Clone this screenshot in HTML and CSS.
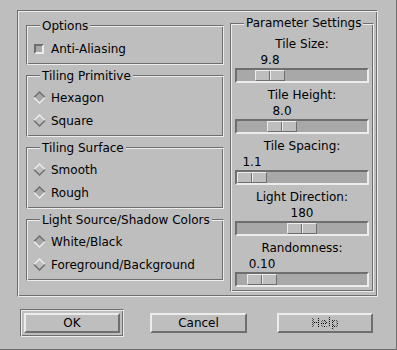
FILE: index.html
```html
<!DOCTYPE html>
<html lang="en">
<head>
  <meta charset="UTF-8">
  <title>Tile Options</title>
  <link rel="stylesheet" href="styles.css">
</head>
<body>
  <div class="dialog">
    <div class="main-frame">
      <div class="left-col">
        <div class="group group-options">
          <span class="group-title">Options</span>
          <div class="row">
            <span class="check"></span>
            <span>Anti-Aliasing</span>
          </div>
        </div>

        <div class="group">
          <span class="group-title">Tiling Primitive</span>
          <div class="row radio is-on">
            <svg class="radio-mark" viewBox="0 0 13 13"><polygon class="mark-top" points="0,6.5 6.5,0 13,6.5"/><polygon class="mark-bottom" points="0,6.5 6.5,13 13,6.5"/><polygon class="mark-fill" points="2,6.5 6.5,2 11,6.5 6.5,11"/></svg>
            <span>Hexagon</span>
          </div>
          <div class="row radio">
            <svg class="radio-mark" viewBox="0 0 13 13"><polygon class="mark-top" points="0,6.5 6.5,0 13,6.5"/><polygon class="mark-bottom" points="0,6.5 6.5,13 13,6.5"/><polygon class="mark-fill" points="2,6.5 6.5,2 11,6.5 6.5,11"/></svg>
            <span>Square</span>
          </div>
        </div>

        <div class="group">
          <span class="group-title">Tiling Surface</span>
          <div class="row radio">
            <svg class="radio-mark" viewBox="0 0 13 13"><polygon class="mark-top" points="0,6.5 6.5,0 13,6.5"/><polygon class="mark-bottom" points="0,6.5 6.5,13 13,6.5"/><polygon class="mark-fill" points="2,6.5 6.5,2 11,6.5 6.5,11"/></svg>
            <span>Smooth</span>
          </div>
          <div class="row radio is-on">
            <svg class="radio-mark" viewBox="0 0 13 13"><polygon class="mark-top" points="0,6.5 6.5,0 13,6.5"/><polygon class="mark-bottom" points="0,6.5 6.5,13 13,6.5"/><polygon class="mark-fill" points="2,6.5 6.5,2 11,6.5 6.5,11"/></svg>
            <span>Rough</span>
          </div>
        </div>

        <div class="group">
          <span class="group-title">Light Source/Shadow Colors</span>
          <div class="row radio is-on">
            <svg class="radio-mark" viewBox="0 0 13 13"><polygon class="mark-top" points="0,6.5 6.5,0 13,6.5"/><polygon class="mark-bottom" points="0,6.5 6.5,13 13,6.5"/><polygon class="mark-fill" points="2,6.5 6.5,2 11,6.5 6.5,11"/></svg>
            <span>White/Black</span>
          </div>
          <div class="row radio">
            <svg class="radio-mark" viewBox="0 0 13 13"><polygon class="mark-top" points="0,6.5 6.5,0 13,6.5"/><polygon class="mark-bottom" points="0,6.5 6.5,13 13,6.5"/><polygon class="mark-fill" points="2,6.5 6.5,2 11,6.5 6.5,11"/></svg>
            <span>Foreground/Background</span>
          </div>
        </div>
      </div>

      <div class="group group-params">
        <span class="group-title">Parameter Settings</span>

        <div class="scale" style="--pos: 18px">
          <div class="scale-label">Tile Size:</div>
          <div class="scale-value">9.8</div>
          <div class="trough"><span class="thumb"></span></div>
        </div>

        <div class="scale" style="--pos: 30px">
          <div class="scale-label">Tile Height:</div>
          <div class="scale-value">8.0</div>
          <div class="trough"><span class="thumb"></span></div>
        </div>

        <div class="scale" style="--pos: 0px">
          <div class="scale-label">Tile Spacing:</div>
          <div class="scale-value">1.1</div>
          <div class="trough"><span class="thumb"></span></div>
        </div>

        <div class="scale" style="--pos: 50px">
          <div class="scale-label">Light Direction:</div>
          <div class="scale-value">180</div>
          <div class="trough"><span class="thumb"></span></div>
        </div>

        <div class="scale" style="--pos: 10px">
          <div class="scale-label">Randomness:</div>
          <div class="scale-value">0.10</div>
          <div class="trough"><span class="thumb"></span></div>
        </div>
      </div>
    </div>

    <div class="actions">
      <div class="default-ring">
        <button class="btn">OK</button>
      </div>
      <button class="btn btn-cancel">Cancel</button>
      <button class="btn btn-help" disabled><span>Help</span></button>
    </div>
  </div>
</body>
</html>
```

FILE: styles.css
```css
:root {
  --bg: #bebebe;
  --light: #ececec;
  --dark: #6e6e6e;
  --trough: #a8a8a8;
}

* {
  margin: 0;
  padding: 0;
  box-sizing: border-box;
}

body {
  background-color: var(--bg);
  color: #000;
  font-family: "DejaVu Sans", sans-serif;
  font-size: 12px;
}

.dialog {
  width: 397px;
  height: 350px;
  border-right: 1px solid var(--dark);
  border-bottom: 1px solid var(--dark);
  overflow: hidden;
}

/* etched-in frame */
.main-frame,
.group,
.default-ring {
  border: 1px solid;
  border-color: var(--dark) var(--light) var(--light) var(--dark);
  box-shadow: inset 1px 1px 0 var(--light), inset -1px -1px 0 var(--dark);
}

.main-frame {
  display: flex;
  align-items: flex-start;
  width: 361px;
  height: 287px;
  margin: 10px 0 0 17px;
  padding: 12px 0 0 8px;
}

.left-col {
  display: flex;
  flex-direction: column;
  gap: 10px;
  width: 198px;
  margin-top: 2px;
}

.group {
  display: flex;
  flex-direction: column;
  padding-bottom: 4px;
}

.group-title {
  align-self: flex-start;
  margin: -7px 0 3px 13px;
  padding: 0 2px;
  line-height: 14px;
  background-color: var(--bg);
  white-space: nowrap;
}

.group-options .group-title {
  margin-bottom: 4px;
}

.row {
  display: flex;
  align-items: center;
  height: 23px;
  padding-left: 6px;
  gap: 5px;
  white-space: nowrap;
}

.check {
  width: 10px;
  height: 10px;
  margin: 0 2px 0 1px;
  border: 2px solid;
  border-color: var(--dark) var(--light) var(--light) var(--dark);
  background-color: var(--trough);
}

.radio-mark {
  width: 13px;
  height: 13px;
  flex: none;
}

.mark-top { fill: var(--light); }
.mark-bottom { fill: var(--dark); }
.mark-fill { fill: var(--bg); }

.radio.is-on .mark-top { fill: var(--dark); }
.radio.is-on .mark-bottom { fill: var(--light); }
.radio.is-on .mark-fill { fill: var(--trough); }

.group-params {
  width: 144px;
  margin-left: 6px;
  padding: 0 4px 4px 4px;
}

.group-params .group-title {
  margin: -8px 0 7px 9px;
}

.scale {
  margin-bottom: 5px;
}

.scale:last-child {
  margin-bottom: 0;
}

.scale-label {
  line-height: 15px;
  text-align: center;
}

.scale-value {
  width: 40px;
  margin-left: calc(var(--pos) - 3px);
  line-height: 16px;
  text-align: center;
}

.trough {
  display: flex;
  height: 15px;
  border: 2px solid;
  border-color: var(--dark) var(--light) var(--light) var(--dark);
  background-color: var(--trough);
}

.thumb {
  width: 30px;
  height: 11px;
  margin-left: var(--pos);
  border: 1px solid;
  border-color: var(--light) var(--dark) var(--dark) var(--light);
  background: linear-gradient(to right, transparent 13px, var(--dark) 13px 14px, var(--light) 14px 15px, transparent 15px) var(--bg);
}

.actions {
  display: flex;
  align-items: center;
  margin: 12px 0 0 20px;
}

.default-ring {
  width: 104px;
  height: 28px;
  padding: 3px;
}

.btn {
  display: block;
  width: 96px;
  height: 20px;
  border: 2px solid;
  border-color: var(--light) var(--dark) var(--dark) var(--light);
  background-color: var(--bg);
  color: #000;
  font-family: "DejaVu Sans", sans-serif;
  font-size: 12px;
  line-height: 16px;
  text-align: center;
}

.btn-cancel {
  width: 97px;
  margin-left: 26px;
}

.btn-help {
  margin-left: 30px;
}

/* stippled label, like a disabled X toolkit button */
.btn-help span {
  color: transparent;
  background: repeating-conic-gradient(#000 0 25%, transparent 0 50%) 0 0 / 2px 2px;
  -webkit-background-clip: text;
  background-clip: text;
}
```
